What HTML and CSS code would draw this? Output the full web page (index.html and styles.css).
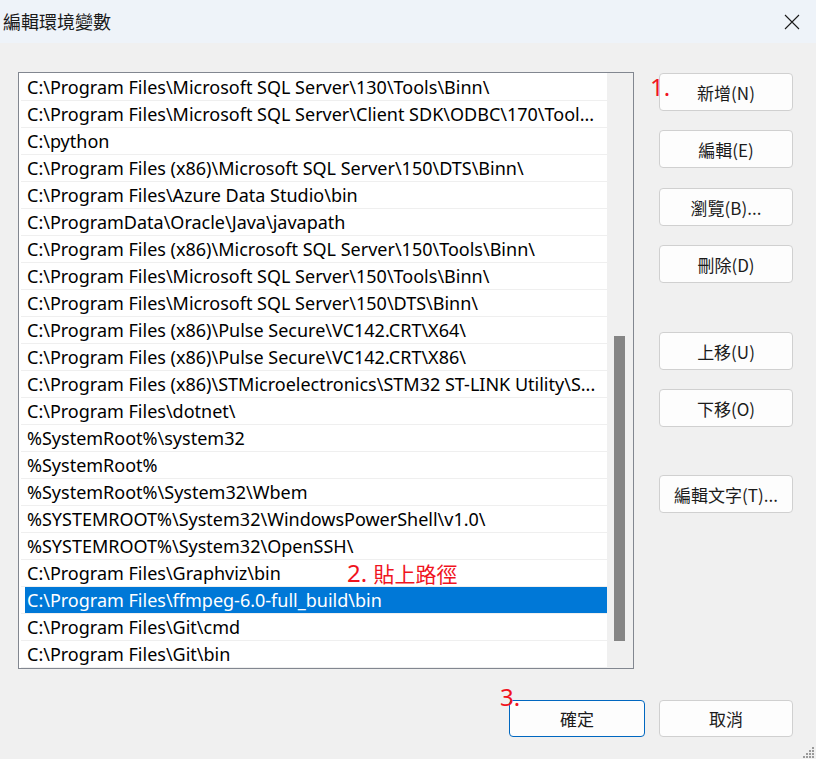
FILE: index.html
```html
<!DOCTYPE html>
<html lang="zh-Hant">
<head>
<meta charset="utf-8">
<title>編輯環境變數</title>
<link rel="stylesheet" href="styles.css">
</head>
<body>
<div class="window">
  <div class="titlebar">
    <span class="title">編輯環境變數</span>
    <span class="close" aria-label="close">
      <svg width="16" height="16" viewBox="0 0 16 16"><path d="M1 1 L15 15 M15 1 L1 15" stroke="#1a1a1a" stroke-width="1.1" fill="none"/></svg>
    </span>
  </div>
  <div class="main">
    <div class="listbox">
      <div class="items">
        <div class="row"><span class="cell">C:\Program Files\Microsoft SQL Server\130\Tools\Binn\</span></div>
        <div class="row"><span class="cell">C:\Program Files\Microsoft SQL Server\Client SDK\ODBC\170\Tool...</span></div>
        <div class="row"><span class="cell">C:\python</span></div>
        <div class="row"><span class="cell">C:\Program Files (x86)\Microsoft SQL Server\150\DTS\Binn\</span></div>
        <div class="row"><span class="cell">C:\Program Files\Azure Data Studio\bin</span></div>
        <div class="row"><span class="cell">C:\ProgramData\Oracle\Java\javapath</span></div>
        <div class="row"><span class="cell">C:\Program Files (x86)\Microsoft SQL Server\150\Tools\Binn\</span></div>
        <div class="row"><span class="cell">C:\Program Files\Microsoft SQL Server\150\Tools\Binn\</span></div>
        <div class="row"><span class="cell">C:\Program Files\Microsoft SQL Server\150\DTS\Binn\</span></div>
        <div class="row"><span class="cell">C:\Program Files (x86)\Pulse Secure\VC142.CRT\X64\</span></div>
        <div class="row"><span class="cell">C:\Program Files (x86)\Pulse Secure\VC142.CRT\X86\</span></div>
        <div class="row"><span class="cell">C:\Program Files (x86)\STMicroelectronics\STM32 ST-LINK Utility\S...</span></div>
        <div class="row"><span class="cell">C:\Program Files\dotnet\</span></div>
        <div class="row"><span class="cell">%SystemRoot%\system32</span></div>
        <div class="row"><span class="cell">%SystemRoot%</span></div>
        <div class="row"><span class="cell">%SystemRoot%\System32\Wbem</span></div>
        <div class="row"><span class="cell">%SYSTEMROOT%\System32\WindowsPowerShell\v1.0\</span></div>
        <div class="row"><span class="cell">%SYSTEMROOT%\System32\OpenSSH\</span></div>
        <div class="row"><span class="cell">C:\Program Files\Graphviz\bin</span></div>
        <div class="row sel"><span class="cell">C:\Program Files\ffmpeg-6.0-full_build\bin</span></div>
        <div class="row"><span class="cell">C:\Program Files\Git\cmd</span></div>
        <div class="row"><span class="cell">C:\Program Files\Git\bin</span></div>
      </div>
      <div class="scrollbar"><div class="thumb"></div></div>
    </div>
    <div class="side">
      <button class="btn">新增(N)</button>
      <button class="btn">編輯(E)</button>
      <button class="btn nudge">瀏覽(B)...</button>
      <button class="btn">刪除(D)</button>
      <button class="btn group1">上移(U)</button>
      <button class="btn">下移(O)</button>
      <button class="btn group2">編輯文字(T)...</button>
    </div>
  </div>
  <div class="footer">
    <button class="btn default">確定</button>
    <button class="btn cancel">取消</button>
  </div>

  <span class="note n1">1.</span>
  <span class="note n2">2. <span class="cjk">貼上路徑</span></span>
  <span class="note n3">3.</span>

  <svg class="grip" width="14" height="14" viewBox="0 0 14 14">
    <g fill="#9a9a9a">
      <rect x="11" y="2" width="2" height="2"/>
      <rect x="8" y="5" width="2" height="2"/><rect x="11" y="5" width="2" height="2"/>
      <rect x="5" y="8" width="2" height="2"/><rect x="8" y="8" width="2" height="2"/><rect x="11" y="8" width="2" height="2"/>
      <rect x="2" y="11" width="2" height="2"/><rect x="5" y="11" width="2" height="2"/><rect x="8" y="11" width="2" height="2"/><rect x="11" y="11" width="2" height="2"/>
    </g>
  </svg>
</div>
</body>
</html>
```

FILE: styles.css
```css
* { box-sizing: border-box; }
html, body { margin: 0; padding: 0; }
body {
  width: 816px;
  height: 759px;
  overflow: hidden;
  font-family: "Noto Sans", "Noto Sans CJK TC", sans-serif;
}
.window {
  position: relative;
  width: 816px;
  height: 759px;
  background: #f0f0f0;
}
.titlebar {
  height: 43px;
  background: #eef3f9;
  display: flex;
  align-items: center;
  justify-content: space-between;
  padding: 0 16px 0 3px;
}
.title {
  font-family: "Noto Sans CJK TC", sans-serif;
  font-size: 18px;
  color: #1a1a1a;
  margin-top: -2px;
}
.close {
  display: flex;
  width: 16px;
  height: 16px;
  margin-top: 1px;
}
.main {
  display: flex;
  padding: 29px 0 0 18px;
}
.listbox {
  width: 616px;
  height: 597px;
  border: 1px solid #828790;
  background: #fff;
  display: flex;
}
.items {
  flex: 1;
  padding-top: 1px;
  overflow: hidden;
}
.row {
  height: 27px;
  margin-left: 2px;
  padding-left: 4px;
  border-bottom: 1px solid #efefef;
  display: flex;
}
.cell {
  flex: 1;
  min-width: 0;
  height: 26px;
  line-height: 26px;
  padding: 0 3px 0 2px;
  font-size: 18px;
  color: #000;
  white-space: nowrap;
  overflow: hidden;
  text-overflow: ellipsis;
}
.row.sel .cell {
  background: #0078d7;
  color: #fff;
}
.scrollbar {
  width: 26px;
  background: #f0f0f0;
  padding: 263px 0 0 7px;
}
.thumb {
  width: 11px;
  height: 305px;
  background: #858585;
}
.side {
  display: flex;
  flex-direction: column;
  width: 134px;
  margin-left: 25px;
  padding-top: 1px;
  gap: 19px;
}
.btn {
  height: 38px;
  width: 134px;
  background: #fdfdfd;
  border: 1px solid #d0d0d0;
  border-radius: 4px;
  font-family: "Noto Sans CJK TC", sans-serif;
  font-size: 17px;
  color: #1b1b1b;
  padding: 0;
}
.btn.nudge { margin-top: 1px; }
.btn.group1 { margin-top: 30px; }
.btn.group2 { margin-top: 29px; }
.footer {
  display: flex;
  justify-content: flex-end;
  gap: 14px;
  padding: 31px 23px 0 0;
}
.footer .btn { height: 37px; }
.btn.default {
  width: 136px;
  border: 1px solid #0067c0;
}
.note {
  position: absolute;
  color: #f0141e;
  font-family: "Noto Sans", sans-serif;
  font-size: 24px;
  line-height: 1;
}
.note .cjk {
  font-family: "Noto Sans CJK TC", sans-serif;
  font-size: 21px;
}
.n1 { left: 650px; top: 75px; }
.n2 { left: 347px; top: 561px; }
.n3 { left: 500px; top: 685px; }
.grip {
  position: absolute;
  right: 1px;
  bottom: 0;
}
```
